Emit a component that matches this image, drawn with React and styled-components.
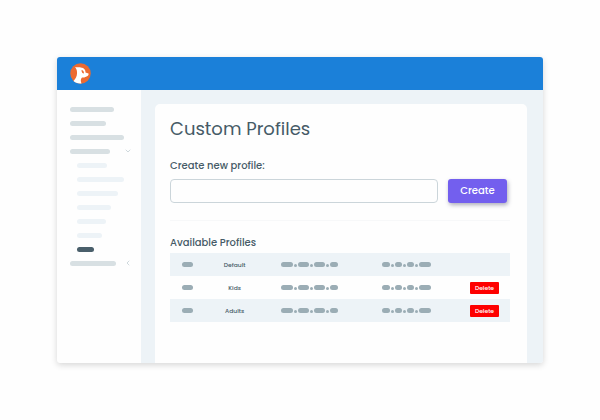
import React from "react";
import styled, { createGlobalStyle } from "styled-components";
import { ChevronDown, ChevronLeft } from "lucide-react";

const GlobalStyle = createGlobalStyle`
  *, *::before, *::after { box-sizing: border-box; }
  body {
    margin: 0;
    background: #fefefe;
    color: #465b67;
    font-family: Poppins, Inter, "Open Sans", sans-serif;
  }
`;

const Page = styled.div`
  padding: 57px;
`;

const Window = styled.div`
  display: flex;
  flex-direction: column;
  min-height: 306px;
  border-radius: 3px;
  overflow: hidden;
  background: #fefefe;
  box-shadow: 0 2px 6px rgba(0, 0, 0, 0.16);
`;

const Header = styled.header`
  display: flex;
  align-items: center;
  height: 33px;
  padding: 0 13px;
  background: #1b80d9;
`;

const Logo = styled.svg`
  display: block;
  width: 21px;
  height: 21px;
`;

const Body = styled.div`
  flex: 1;
  display: flex;
`;

const Sidebar = styled.nav`
  flex: 0 0 84px;
  padding: 12px 9px 12px 13px;
`;

const NavList = styled.ul`
  margin: 0;
  padding: 0;
  list-style: none;
`;

const NavItem = styled.li`
  display: flex;
  align-items: center;
  justify-content: space-between;
  height: 14px;
  padding-left: ${(p) => (p.$nested ? "7px" : "0")};
  color: #cfd9dd;
`;

const barColors = { top: "#d8e0e3", sub: "#edf3f7", active: "#4a5f6b" };

const Bar = styled.span`
  width: ${(p) => p.$width}px;
  height: 5px;
  border-radius: 3px;
  background: ${(p) => barColors[p.$tone]};
`;

const Main = styled.main`
  flex: 1;
  display: flex;
  padding: 14px 16px 0 14px;
  background: #edf3f7;
`;

const Card = styled.section`
  flex: 1;
  padding: 13px 17px 24px 15px;
  border-radius: 5px 5px 0 0;
  background: #fefefe;
`;

const Title = styled.h1`
  margin: 0;
  font-size: 18px;
  line-height: 24px;
  font-weight: 400;
`;

const FieldLabel = styled.label`
  display: block;
  margin-top: 17px;
  font-size: 10px;
  line-height: 16px;
  font-weight: 500;
`;

const FormRow = styled.div`
  display: flex;
  gap: 10px;
  margin-top: 5px;
  padding-right: 3px;
`;

const TextInput = styled.input`
  flex: 1;
  min-width: 0;
  height: 24px;
  padding: 0 8px;
  border: 1px solid #cbd5da;
  border-radius: 4px;
  background: #fefefe;
  color: inherit;
  font: inherit;
  font-size: 10px;
`;

const CreateButton = styled.button`
  width: 59px;
  height: 24px;
  padding: 0;
  border: 0;
  border-radius: 3px;
  background: #735fee;
  box-shadow: 1px 2px 4px rgba(50, 50, 80, 0.4);
  color: #fff;
  font: inherit;
  font-size: 10px;
  font-weight: 500;
`;

const Divider = styled.hr`
  margin: 17px 0 0;
  border: 0;
  border-top: 1px solid #f7f8f9;
`;

const SectionTitle = styled.h2`
  margin: 14px 0 2px;
  font-size: 10px;
  line-height: 16px;
  font-weight: 500;
`;

const Table = styled.table`
  width: 100%;
  table-layout: fixed;
  border-collapse: collapse;
`;

const Col = styled.col`
  width: ${(p) => p.$share}%;
`;

const Row = styled.tr`
  height: 23px;

  &:nth-child(odd) {
    background: #edf3f7;
  }
`;

const Cell = styled.td`
  padding: 0;
  font-size: 6px;
  line-height: 8px;
  font-weight: 500;
  text-align: center;
  vertical-align: middle;
`;

const Masked = styled.div`
  display: flex;
  align-items: center;
  justify-content: center;
  gap: 1px;
`;

const Pill = styled.span`
  width: ${(p) => p.$width}px;
  height: 5px;
  border-radius: 3px;
  background: #9badb5;
`;

const Dot = styled.span`
  align-self: flex-end;
  width: 3px;
  height: 3px;
  border-radius: 50%;
  background: #9badb5;
`;

const DeleteButton = styled.button`
  display: block;
  width: 29px;
  height: 12px;
  margin: 0 auto;
  padding: 0;
  border: 0;
  border-radius: 1px;
  background: #fe0000;
  color: #fff;
  font: inherit;
`;

const NAV = [
  { width: 44, tone: "top" },
  { width: 36, tone: "top" },
  { width: 54, tone: "top" },
  { width: 40, tone: "top", icon: ChevronDown },
  { width: 30, tone: "sub" },
  { width: 47, tone: "sub" },
  { width: 41, tone: "sub" },
  { width: 34, tone: "sub" },
  { width: 29, tone: "sub" },
  { width: 25, tone: "sub" },
  { width: 17, tone: "active" },
  { width: 46, tone: "top", icon: ChevronLeft },
];

const PROFILES = [
  { name: "Default", removable: false },
  { name: "Kids", removable: true },
  { name: "Adults", removable: true },
];

function MaskedAddress({ parts }) {
  return (
    <Masked>
      {parts.map((width, i) => (
        <React.Fragment key={i}>
          {i > 0 && <Dot />}
          <Pill $width={width} />
        </React.Fragment>
      ))}
    </Masked>
  );
}

function DogLogo() {
  return (
    <Logo viewBox="0 0 42 42" aria-hidden="true">
      <circle cx="21" cy="21" r="20.5" fill="#ec6a31" />
      <path
        d="M10 8 C15 9 20 7 26 10 C30 12 31 16 31 19 L37 21 C38 23 36 26 33 27 C30 29 27 29 24 29 C21 32 21 36 23 41 C16 42 10 39 7 36 C11 32 14 26 14 21 C14 16 14 13 10 8 Z"
        fill="#fff"
      />
      <path d="M23 14 C26 14 28 17 28 21 C25 21 23 19 23 14 Z" fill="#ec6a31" />
    </Logo>
  );
}

export default function App() {
  return (
    <>
      <GlobalStyle />
      <Page>
        <Window>
          <Header>
            <DogLogo />
          </Header>
          <Body>
            <Sidebar>
              <NavList>
                {NAV.map(({ width, tone, icon: Icon }, i) => (
                  <NavItem key={i} $nested={tone !== "top"}>
                    <Bar $width={width} $tone={tone} />
                    {Icon && <Icon size={8} strokeWidth={3} />}
                  </NavItem>
                ))}
              </NavList>
            </Sidebar>
            <Main>
              <Card>
                <Title>Custom Profiles</Title>
                <form onSubmit={(e) => e.preventDefault()}>
                  <FieldLabel htmlFor="profile-name">Create new profile:</FieldLabel>
                  <FormRow>
                    <TextInput id="profile-name" type="text" />
                    <CreateButton type="submit">Create</CreateButton>
                  </FormRow>
                </form>
                <Divider />
                <SectionTitle id="profiles-title">Available Profiles</SectionTitle>
                <Table aria-labelledby="profiles-title">
                  <colgroup>
                    <Col $share={10} />
                    <Col $share={18} />
                    <Col $share={26} />
                    <Col $share={31} />
                    <Col $share={15} />
                  </colgroup>
                  <tbody>
                    {PROFILES.map(({ name, removable }) => (
                      <Row key={name}>
                        <Cell>
                          <Masked>
                            <Pill $width={11} />
                          </Masked>
                        </Cell>
                        <Cell>{name}</Cell>
                        <Cell>
                          <MaskedAddress parts={[12, 11, 11, 8]} />
                        </Cell>
                        <Cell>
                          <MaskedAddress parts={[8, 7, 7, 12]} />
                        </Cell>
                        <Cell>
                          {removable && <DeleteButton type="button">Delete</DeleteButton>}
                        </Cell>
                      </Row>
                    ))}
                  </tbody>
                </Table>
              </Card>
            </Main>
          </Body>
        </Window>
      </Page>
    </>
  );
}
